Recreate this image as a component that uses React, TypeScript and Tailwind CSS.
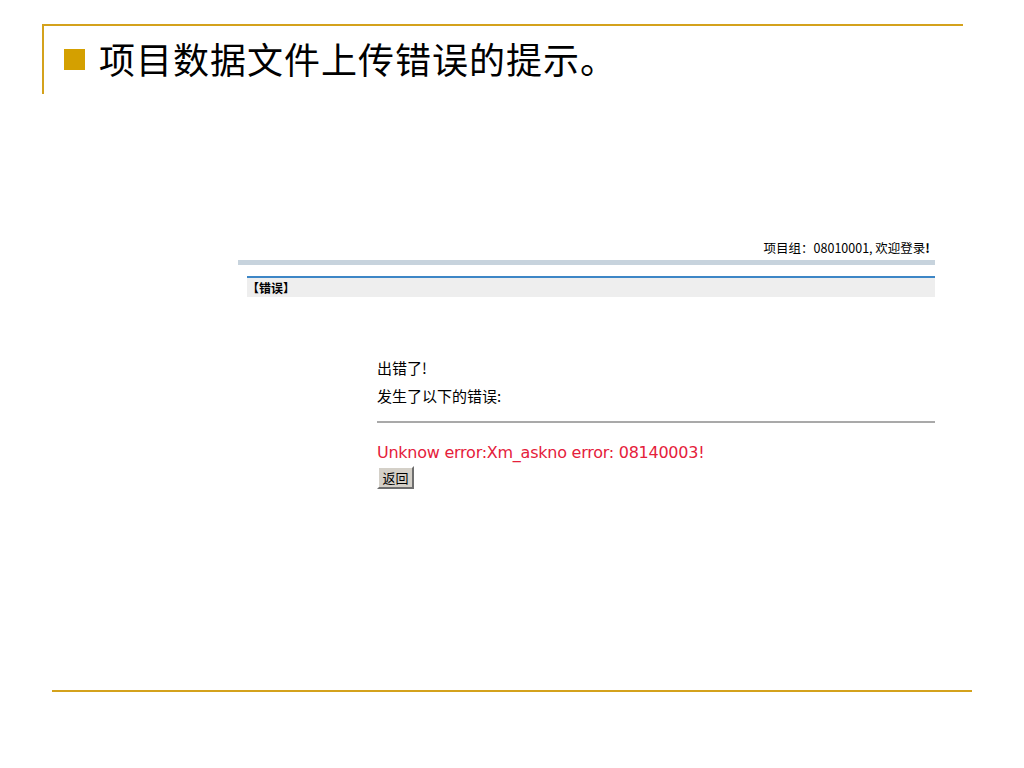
export default function App() {
  return (
    <div className="w-[1024px] h-[768px] bg-white flex flex-col font-['Liberation_Sans','Noto_Sans_CJK_SC',sans-serif] text-black">
      {/* slide title frame */}
      <div className="mt-[24px] ml-[42px] w-[921px] h-[70px] border-t-2 border-l-2 border-[#d4a21c] flex items-start pt-[22px] pl-[20px]">
        <div className="w-[21px] h-[21px] bg-[#d4a000] mt-[1px]" />
        <div className="ml-[14px] text-[36px] leading-[26px] tracking-[1px] font-['Noto_Sans_CJK_SC',sans-serif] -mt-[3px]">
          项目数据文件上传错误的提示。
        </div>
      </div>

      {/* captured web page */}
      <div className="ml-[238px] w-[697px] mt-[147px] flex flex-col">
        <div className="flex justify-end pr-[5px] text-[12.5px] leading-[14px] font-['Noto_Sans_CJK_SC',sans-serif]">
          项目组：08010001, 欢迎登录<span className="font-bold">!</span>
        </div>
        <div className="mt-[5px] h-[5px] bg-[#c7d3dd]" />
        <div className="ml-[9px] mt-[11px] border-t-2 border-[#3d86c6] bg-[#eeeeee] h-[21px] flex items-center">
          <span className="text-[12px] font-bold leading-[14px] font-['Noto_Sans_CJK_SC',sans-serif]">【错误】</span>
        </div>

        <div className="ml-[139px] mt-[57px] flex flex-col">
          <div className="text-[15px] leading-[28px] font-['Noto_Sans_CJK_SC',sans-serif]">
            <div>出错了!</div>
            <div>发生了以下的错误:</div>
          </div>
          <div className="mt-[11px] h-[2px] bg-[#a9a9a9]" />
          <div className="mt-[20px] text-[#e5203b] text-[16px] leading-[20px] font-['DejaVu_Sans',sans-serif] tracking-[-0.25px]">
            Unknow error:Xm_askno error: 08140003!
          </div>
          <div>
            <button className="mt-[3px] w-[37px] h-[23px] bg-[#d4d0c8] border-2 border-t-white border-l-white border-r-[#6e6e6e] border-b-[#6e6e6e] text-[13px] leading-[16px] font-['Noto_Sans_CJK_SC',sans-serif]">
              返回
            </button>
          </div>
        </div>
      </div>

      {/* slide footer line */}
      <div className="mt-auto mb-[76px] ml-[52px] w-[920px] h-[2px] bg-[#d4a21c]" />
    </div>
  );
}
